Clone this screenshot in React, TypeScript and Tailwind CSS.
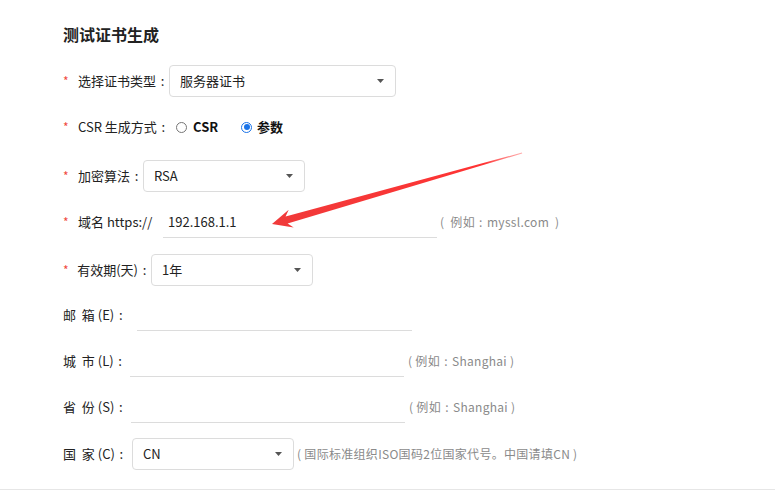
import React from "react";

const font = { fontFamily: '"Noto Sans CJK SC", "Noto Sans", sans-serif' };

function Colon() {
  return <span className="inline-block w-[1em] text-center">:</span>;
}

function Caret() {
  return (
    <svg width="7" height="4" viewBox="0 0 7 4" className="shrink-0">
      <path d="M0 0 L7 0 L3.5 4 Z" fill="#555" />
    </svg>
  );
}

function Select({ value, width }: { value: string; width: number }) {
  return (
    <div
      className="h-[32px] flex items-center justify-between pl-[10px] pr-[11px] border border-[#dcdcdc] rounded-[4px] bg-white text-[13px] text-[#222]"
      style={{ width }}
    >
      <span>{value}</span>
      <Caret />
    </div>
  );
}

function Underline({ width, value }: { width: number; value?: string }) {
  return (
    <div
      className="h-[32px] flex items-center pl-[5px] border-b border-[#dcdcdc] text-[13px] text-[#222]"
      style={{ width }}
    >
      {value}
    </div>
  );
}

function Label({ text, req, width, colon = true }: { text: string; req?: boolean; width: number; colon?: boolean }) {
  return (
    <div className="flex items-center shrink-0 text-[13px] text-[#222] whitespace-pre" style={{ width }}>
      {req && <span className="text-[#f04a3e] w-[15px] text-[12px]">*</span>}
      <span>
        {text}
        {colon && <Colon />}
      </span>
    </div>
  );
}

function Hint({ pre, post, ml }: { pre: string; post: string; ml: number }) {
  return (
    <span className="text-[12px] text-[#8a8a8a] whitespace-pre tracking-[0.3px]" style={{ marginLeft: ml }}>
      {pre}
      <Colon />
      {post}
    </span>
  );
}

export default function App() {
  return (
    <div className="relative w-[775px] h-[494px] bg-white overflow-hidden" style={font}>
      <div className="flex flex-col pl-[63px] pt-[24px]">
        <div className="h-[20px] leading-[20px] text-[16px] font-bold text-[#222]">测试证书生成</div>

        <div className="flex items-center mt-[21px] h-[32px]">
          <Label req text="选择证书类型" width={106} />
          <Select value="服务器证书" width={227} />
        </div>

        <div className="flex items-center mt-[14px] h-[32px]">
          <Label req text="CSR 生成方式" width={113} />
          <span className="w-[11px] h-[11px] rounded-full border border-[#767676] bg-white shrink-0" />
          <span className="ml-[6px] text-[13px] font-bold text-[#111]">CSR</span>
          <span className="ml-[23px] w-[11px] h-[11px] rounded-full border-[1.5px] border-[#1a73e8] flex items-center justify-center shrink-0">
            <span className="w-[6px] h-[6px] rounded-full bg-[#1a73e8]" />
          </span>
          <span className="ml-[5px] text-[13px] font-bold text-[#111]">参数</span>
        </div>

        <div className="flex items-center mt-[17px] h-[32px]">
          <Label req text="加密算法" width={80} />
          <Select value="RSA" width={162} />
        </div>

        <div className="flex items-center mt-[14px] h-[32px]">
          <Label req text="域名 https://" width={100} colon={false} />
          <Underline width={274} value="192.168.1.1" />
          <Hint pre="(  例如" post="myssl.com  )" ml={3} />
        </div>

        <div className="flex items-center mt-[16px] h-[32px]">
          <Label req text="有效期(天)" width={88} />
          <Select value="1年" width={162} />
        </div>

        <div className="flex items-center mt-[13px] h-[32px]">
          <Label text="邮  箱 (E)" width={74} />
          <Underline width={275} />
        </div>

        <div className="flex items-center mt-[14px] h-[32px]">
          <Label text="城  市 (L)" width={67} />
          <Underline width={274} />
          <Hint pre="( 例如" post="Shanghai )" ml={4} />
        </div>

        <div className="flex items-center mt-[14px] h-[32px]">
          <Label text="省  份 (S)" width={68} />
          <Underline width={274} />
          <Hint pre="( 例如" post="Shanghai )" ml={4} />
        </div>

        <div className="flex items-center mt-[15px] h-[32px]">
          <Label text="国  家 (C)" width={69} />
          <Select value="CN" width={162} />
          <span className="ml-[3px] text-[12px] text-[#8a8a8a] whitespace-pre tracking-[0.3px]">( 国际标准组织ISO国码2位国家代号。中国请填CN )</span>
        </div>
      </div>

      <div className="absolute left-0 right-0 top-[489px] h-px bg-[#e6e6e6]" />

      <svg className="absolute left-0 top-0 pointer-events-none" width="775" height="494">
        <defs>
          <linearGradient id="ag" x1="522" y1="153" x2="272" y2="224" gradientUnits="userSpaceOnUse">
            <stop offset="0" stopColor="#f77" stopOpacity="0.6" />
            <stop offset="0.15" stopColor="#f33" />
            <stop offset="1" stopColor="#f03a3a" />
          </linearGradient>
        </defs>
        <polygon
          points="272,224 288.7,209.8 285.6,216.6 522,152.6 522.2,153.4 287.6,223.4 293.7,227.6"
          fill="url(#ag)"
        />
      </svg>
    </div>
  );
}
